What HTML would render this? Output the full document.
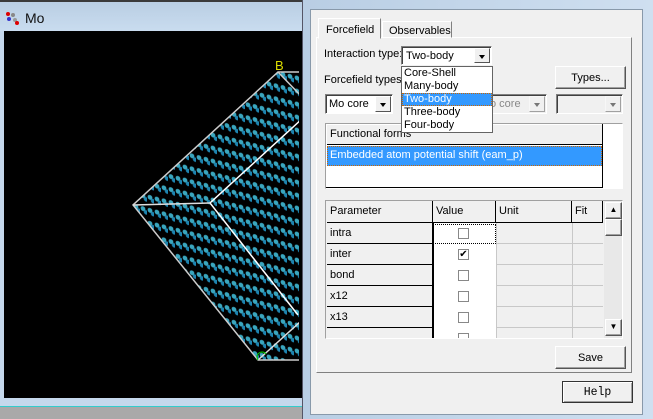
<!DOCTYPE html>
<html><head><style>
*{box-sizing:border-box;margin:0;padding:0}
body{width:653px;height:419px;overflow:hidden;background:#a9a9a9;font-family:"Liberation Sans",sans-serif;font-size:11px;color:#000;position:relative}
.a{position:absolute}
.btn{position:absolute;background:#f0f0f0;border:1px solid;border-color:#fff #555 #555 #fff;box-shadow:inset -1px -1px 0 #a0a0a0;text-align:center}
.combo{position:absolute;background:#fff;border:1px solid;border-color:#808080 #fff #fff #808080;box-shadow:inset 1px 1px 0 #404040}
.arr{position:absolute;right:1px;top:1px;bottom:1px;width:16px;background:#f0f0f0;border:1px solid;border-color:#fff #555 #555 #fff}
.arr:after{content:"";position:absolute;left:4px;top:6px;border:3px solid transparent;border-top:4px solid #000;border-bottom:0}
.cell{position:absolute;border-bottom:1px solid #000;border-right:1px solid #000;padding-left:3px;line-height:20px}
.cb{position:absolute;width:11px;height:11px;border:1px solid #888;background:#fff}
</style></head><body>
<div class="a" style="left:0;top:0;width:303px;height:31px;background:linear-gradient(#b8cde2,#c9dcef)"></div>
<div class="a" style="left:0;top:0;width:303px;height:2px;background:#3a3a3a"></div>
<div class="a" style="left:5px;top:11px;width:14px;height:14px">
<svg width="14" height="14"><circle cx="3" cy="3" r="2" fill="#d00"/><circle cx="8" cy="4" r="2" fill="#888"/><circle cx="4" cy="8" r="2" fill="#33c"/><circle cx="10" cy="9" r="2" fill="#999"/><circle cx="12" cy="12" r="2" fill="#d00"/></svg></div>
<div class="a" style="left:25px;top:10px;font-size:14px;color:#111">Mo</div>
<div class="a" style="left:0;top:31px;width:4px;height:370px;background:#c5d8ec"></div>
<div class="a" style="left:4px;top:31px;width:299px;height:367px;background:#000;overflow:hidden">
<svg width="299" height="367" style="position:absolute;left:-4px;top:-31px">
<defs>
<pattern id="p" width="7" height="13" patternUnits="userSpaceOnUse" patternTransform="skewY(14)">
<circle cx="3" cy="4" r="2.4" fill="#3aa6be"/><circle cx="6" cy="7" r="2.2" fill="#1d84b0"/>
</pattern>
<clipPath id="c"><polygon points="278,72 133,205 258,360 303,360 303,72"/></clipPath>
</defs>
<rect x="0" y="31" width="303" height="400" fill="url(#p)" clip-path="url(#c)"/>
<polyline points="303,72 278,72 133,205 258,360 303,360" fill="none" stroke="#ccc" stroke-width="1.5"/>
<polyline points="278,72 303,98" fill="none" stroke="#ccc" stroke-width="1.5"/>
<polyline points="303,118 210,203 298,315" fill="none" stroke="#fff" stroke-width="1.5"/>
<line x1="258" y1="360" x2="300" y2="322" stroke="#ddd" stroke-width="1.5"/>
<line x1="133" y1="205" x2="210" y2="203" stroke="#ddd" stroke-width="1.5"/>
<text x="275" y="70" fill="#dd0" font-size="13" font-family="Liberation Sans">B</text>
<path d="M258 360 a5 5 0 0 1 8 -6" stroke="#0c0" fill="none"/>
</svg></div>
<div class="a" style="left:0;top:398px;width:303px;height:8px;background:#c5d8ec"></div>
<div class="a" style="left:0;top:406px;width:303px;height:1px;background:#3cc"></div>
<div class="a" style="left:302px;top:0;width:351px;height:419px;background:linear-gradient(90deg,#b9cee4,#cfdff0);border-left:1px solid #556"></div>
<div class="a" style="left:310px;top:9px;width:333px;height:406px;background:#f0f0f0;border:1px solid #8899aa"></div>
<div class="a" style="left:316px;top:37px;width:316px;height:336px;border:1px solid;border-color:#fff #808080 #808080 #fff"></div>
<div class="a" style="left:318px;top:18px;width:63px;height:21px;background:#f0f0f0;border:1px solid;border-color:#fff #808080 transparent #fff;padding:5px 0 0 7px;font-size:11px">Forcefield</div>
<div class="a" style="left:382px;top:21px;width:70px;height:17px;border:1px solid;border-color:#fff #808080 transparent #fff;padding:3px 0 0 6px;font-size:11px">Observables</div>
<div class="a" style="left:324px;top:48px;font-size:11px">Interaction type:</div>
<div class="combo" style="left:401px;top:46px;width:91px;height:19px"><span class="a" style="left:4px;top:3px;font-size:11px">Two-body</span><div class="arr"></div></div>
<div class="a" style="left:324px;top:74px;font-size:11px">Forcefield types:</div>
<div class="btn" style="left:555px;top:66px;width:71px;height:23px;padding-top:5px;font-size:11px">Types...</div>
<div class="combo" style="left:325px;top:94px;width:68px;height:20px"><span class="a" style="left:3px;top:3px;font-size:11px">Mo core</span><div class="arr"></div></div>
<div class="combo" style="left:480px;top:94px;width:67px;height:20px;background:#f0f0f0"><span class="a" style="left:9px;top:3px;font-size:11px;color:#888">o core</span><div class="arr" style="opacity:.5"></div></div>
<div class="combo" style="left:556px;top:94px;width:67px;height:20px;background:#f0f0f0"><div class="arr" style="opacity:.5"></div></div>
<div class="a" style="left:325px;top:123px;width:298px;height:66px;background:#fff;border:1px solid;border-color:#a0a0a0 #fff #fff #a0a0a0"></div>
<div class="a" style="left:326px;top:124px;width:277px;height:64px;border-right:1px solid #000;border-bottom:1px solid #000"></div>
<div class="a" style="left:327px;top:125px;width:275px;height:20px;background:#f0f0f0;border-bottom:1px solid #000;padding:3px 0 0 3px;font-size:11px">Functional forms</div>
<div class="a" style="left:327px;top:146px;width:275px;height:20px;background:#3399ff;color:#fff;padding:3px 0 0 3px;font-size:11px;outline:1px dotted #c60;outline-offset:-1px">Embedded atom potential shift (eam_p)</div>
<div class="a" style="left:325px;top:200px;width:298px;height:139px;background:#f0f0f0;border:1px solid;border-color:#a0a0a0 #fff #fff #a0a0a0;overflow:hidden">
<div class="cell" style="left:1px;top:0;width:106px;height:22px">Parameter</div>
<div class="cell" style="left:107px;top:0;width:63px;height:22px">Value</div>
<div class="cell" style="left:170px;top:0;width:76px;height:22px">Unit</div>
<div class="cell" style="left:246px;top:0;width:31px;height:22px">Fit</div>
<div class="a" style="left:107px;top:22px;width:63px;height:120px;background:#fff"></div>
<div class="a" style="left:170px;top:22px;width:107px;height:120px;background:#f0f0f0;background-image:linear-gradient(#c8c8c8 1px,transparent 1px);background-size:100% 21px;background-position:0 20px"></div>
<div class="a" style="left:170px;top:22px;width:1px;height:120px;background:#c8c8c8"></div>
<div class="a" style="left:246px;top:22px;width:1px;height:120px;background:#c8c8c8"></div>
<div class="cell" style="left:1px;top:22px;width:106px;height:21px">intra</div>
<div class="cell" style="left:1px;top:43px;width:106px;height:21px">inter</div>
<div class="cell" style="left:1px;top:64px;width:106px;height:21px">bond</div>
<div class="cell" style="left:1px;top:85px;width:106px;height:21px">x12</div>
<div class="cell" style="left:1px;top:106px;width:106px;height:21px">x13</div>
<div class="cell" style="left:1px;top:127px;width:106px;height:21px"></div>
<div class="a" style="left:107px;top:22px;width:1px;height:120px;background:#000"></div>
<div class="a" style="left:107px;top:23px;width:63px;height:20px;outline:1px dotted #000;outline-offset:-1px"></div>
<div class="cb" style="left:132px;top:27px"></div>
<div class="cb" style="left:132px;top:48px;font-size:10px;line-height:9px;text-align:center">✔</div>
<div class="cb" style="left:132px;top:69px"></div>
<div class="cb" style="left:132px;top:90px"></div>
<div class="cb" style="left:132px;top:111px"></div>
<div class="cb" style="left:132px;top:132px"></div>
<div class="a" style="left:278px;top:0;width:18px;height:139px;background:#e8e8e8"></div>
<div class="btn" style="left:279px;top:1px;width:17px;height:17px;font-size:8px;line-height:14px">▲</div>
<div class="btn" style="left:279px;top:18px;width:17px;height:17px"></div>
<div class="btn" style="left:279px;top:118px;width:17px;height:17px;font-size:8px;line-height:14px">▼</div>
</div>
<div class="btn" style="left:555px;top:346px;width:71px;height:23px;padding-top:5px;font-size:11px">Save</div>
<div class="btn" style="left:562px;top:381px;width:71px;height:22px;padding-top:4px;font-family:'Liberation Mono',monospace;font-size:11.5px;border:1px solid #333;box-shadow:inset 1px 1px 0 #fff,inset -1px -1px 0 #a0a0a0">Help</div>
<div class="a" style="left:401px;top:66px;width:92px;height:67px;background:#fff;border:1px solid #646464;font-size:11px;line-height:13px">
<div style="padding-left:2px">Core-Shell</div>
<div style="padding-left:2px">Many-body</div>
<div style="padding-left:2px;background:#3399ff;color:#fff;outline:1px dotted #c60;outline-offset:-1px">Two-body</div>
<div style="padding-left:2px">Three-body</div>
<div style="padding-left:2px">Four-body</div>
</div>
</body></html>
